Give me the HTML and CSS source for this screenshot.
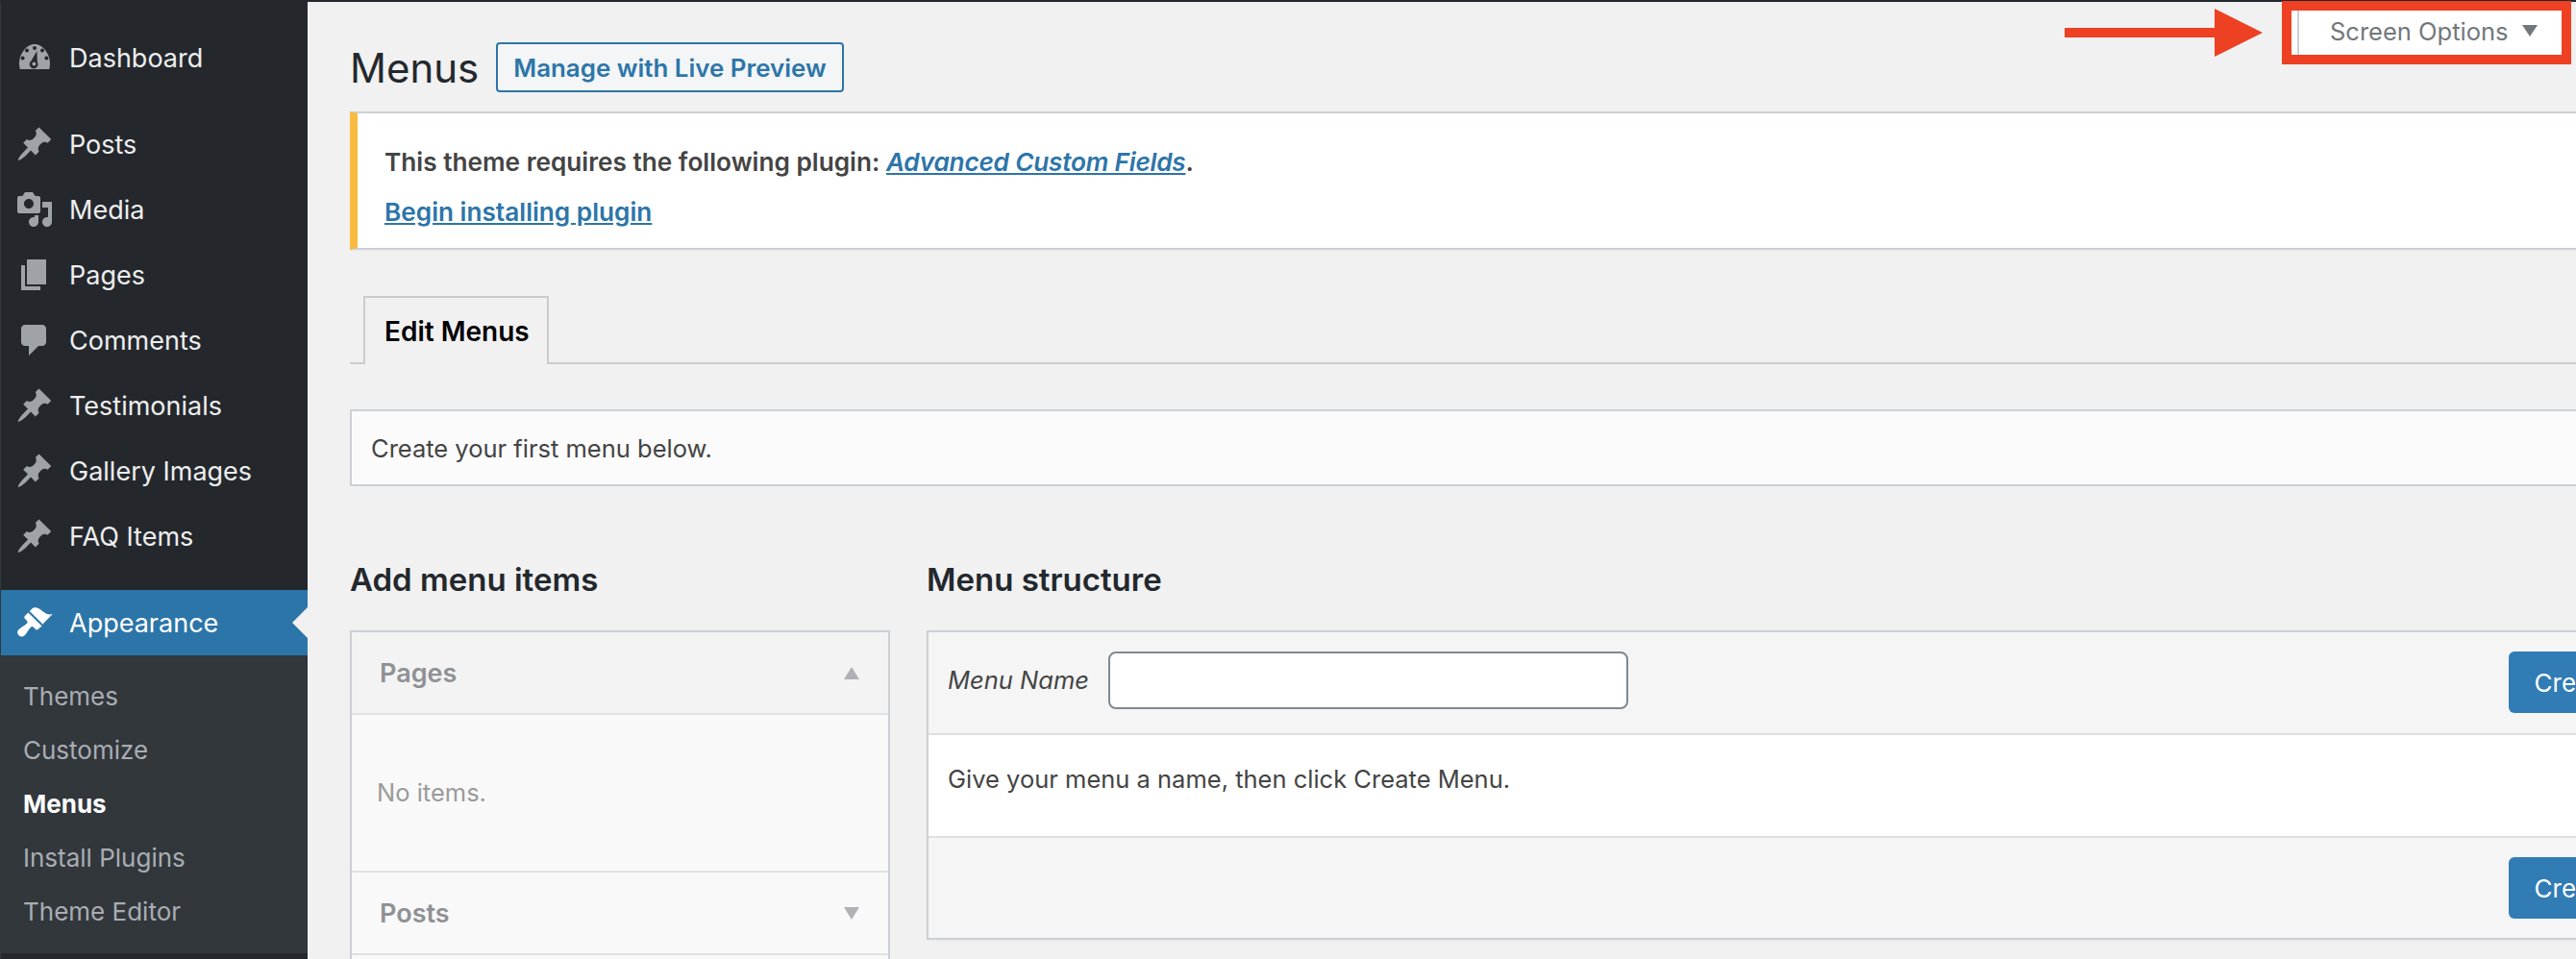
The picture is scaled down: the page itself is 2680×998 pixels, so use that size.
FILE: index.html
```html
<!DOCTYPE html>
<html lang="en">
<head>
    <meta charset="UTF-8">
    <title>Menus</title>
    <link rel="stylesheet" href="styles.css">
</head>
<body>
    <svg class="icon-defs" aria-hidden="true">
        <symbol id="icon-pin" viewBox="0 0 20 20"><path d="M10.44 3.02l1.82-1.82 6.36 6.35-1.83 1.82c-1.05-.68-2.48-.57-3.41.36l-.75.75c-.92.93-1.04 2.35-.35 3.41l-1.83 1.82-2.41-2.41-2.8 2.79c-.42.42-3.38 2.71-3.8 2.29s1.86-3.39 2.28-3.81l2.79-2.79L4.1 9.36l1.83-1.82c1.05.69 2.48.57 3.4-.36l.75-.75c.93-.92 1.05-2.35.36-3.41z"/></symbol>
    </svg>

    <div class="topbar"></div>

    <div class="wrap">
        <!-- Sidebar -->
        <aside class="sidebar">
            <a class="nav-item nav-dashboard">
                <svg class="nav-icon" viewBox="0 0 20 20">
                    <path d="M2.400 16C2.100 15 2 14 2 13c0-4.800 3.600-10 8-10s8 5.200 8 10c0 1-.1 2-.4 3z"/>
                    <g class="dial">
                        <circle cx="10" cy="5" r="1"/><circle cx="6" cy="6.300" r="1"/><circle cx="14" cy="6.300" r="1"/>
                        <circle cx="3.800" cy="10.200" r="1"/><circle cx="16.200" cy="10.200" r="1"/>
                        <path d="M11.200 6.500L11.400 12.200A2.200 2.200 0 1 1 8.300 11.600z"/>
                    </g>
                    <circle cx="9.700" cy="13.300" r="1"/>
                </svg>
                Dashboard
            </a>
            <a class="nav-item nav-first">
                <svg class="nav-icon"><use href="#icon-pin"/></svg>
                Posts
            </a>
            <a class="nav-item">
                <svg class="nav-icon" viewBox="0 0 20 20"><path d="M13 11V4c0-.55-.45-1-1-1h-1.670L9 1H5L3.670 3H2c-.55 0-1 .45-1 1v7c0 .55.45 1 1 1h10c.55 0 1-.45 1-1zM7 4.500c1.380 0 2.500 1.120 2.500 2.500S8.380 9.500 7 9.500 4.500 8.380 4.500 7 5.620 4.500 7 4.500zM14 6h5v10.500c0 1.380-1.120 2.500-2.500 2.500S14 17.880 14 16.500s1.120-2.500 2.500-2.500c.17 0 .34.020.5.050V9h-3V6zm-4 8.050V13h2v3.500c0 1.380-1.120 2.500-2.500 2.500S7 17.880 7 16.500 8.120 14 9.500 14c.17 0 .34.020.5.050z"/></svg>
                Media
            </a>
            <a class="nav-item">
                <svg class="nav-icon" viewBox="0 0 20 20"><path d="M6 15V2h10v13H6zm-1 1h8v2H3V5h2v11z"/></svg>
                Pages
            </a>
            <a class="nav-item">
                <svg class="nav-icon" viewBox="0 0 20 20"><path d="M5 2h9c1.100 0 2 .9 2 2v7c0 1.100-.9 2-2 2h-2l-5 5v-5H5c-1.100 0-2-.9-2-2V4c0-1.100.9-2 2-2z"/></svg>
                Comments
            </a>
            <a class="nav-item">
                <svg class="nav-icon"><use href="#icon-pin"/></svg>
                Testimonials
            </a>
            <a class="nav-item">
                <svg class="nav-icon"><use href="#icon-pin"/></svg>
                Gallery Images
            </a>
            <a class="nav-item">
                <svg class="nav-icon"><use href="#icon-pin"/></svg>
                FAQ Items
            </a>
            <a class="nav-item nav-current">
                <svg class="nav-icon" viewBox="0 0 20 20"><path d="M14.480 11.060L7.410 3.990l1.500-1.500c.5-.56 2.300-.47 3.510.32 1.210.8 1.430 1.280 2.910 2.100 1.180.64 2.450 1.260 4.170.51l-5.520 5.640zM13.770 11.770L6.700 4.700 4.930 6.470c-.39.39-.39 1.020 0 1.410l1.060 1.060c.39.39.39 1.030 0 1.420-.6.6-1.420 1.100-2.190 1.580-1.020.6-1.650 1.200-2.040 1.590-.97.97-.97 2.080 0 3.050.97.97 2.080.97 3.050 0 .39-.39.99-1.020 1.590-2.040.48-.77.98-1.590 1.580-2.190.39-.39 1.030-.39 1.420 0l1.060 1.060c.39.39 1.020.39 1.410 0z"/></svg>
                Appearance
            </a>
            <ul class="submenu">
                <li>Themes</li>
                <li>Customize</li>
                <li class="submenu-current">Menus</li>
                <li>Install Plugins</li>
                <li>Theme Editor</li>
            </ul>
        </aside>

        <!-- Page content -->
        <main class="content">
            <div class="title-row">
                <h1>Menus</h1>
                <a class="outline-btn">Manage with Live Preview</a>
            </div>

            <div class="notice">
                <p class="notice-line"><strong>This theme requires the following plugin: <a class="notice-link"><em>Advanced Custom Fields</em></a>.</strong></p>
                <p class="notice-line"><a class="notice-link"><strong>Begin installing plugin</strong></a></p>
            </div>

            <div class="tabs">
                <a class="tab">Edit Menus</a>
            </div>

            <div class="manage-box">Create your first menu below.</div>

            <div class="columns">
                <section class="col-items">
                    <h2>Add menu items</h2>
                    <div class="accordion">
                        <div class="acc-head acc-open">
                            <span>Pages</span>
                            <i class="tri tri-up"></i>
                        </div>
                        <div class="acc-body">No items.</div>
                        <div class="acc-head">
                            <span>Posts</span>
                            <i class="tri tri-down"></i>
                        </div>
                        <div class="acc-rest"></div>
                    </div>
                </section>

                <section class="col-structure">
                    <h2>Menu structure</h2>
                    <div class="menu-box">
                        <div class="menu-bar">
                            <label class="name-field">
                                <em>Menu Name</em>
                                <input type="text" class="name-input">
                            </label>
                            <button class="primary-btn">Create Menu</button>
                        </div>
                        <div class="menu-body">Give your menu a name, then click Create Menu.</div>
                        <div class="menu-bar menu-bar-bottom">
                            <button class="primary-btn">Create Menu</button>
                        </div>
                    </div>
                </section>
            </div>
        </main>
    </div>

    <!-- Annotation drawn over the screenshot -->
    <svg class="arrow" viewBox="0 0 206 50"><path d="M0 20h156V0l50 25-50 25V30H0z"/></svg>
    <div class="screen-options">
        <div class="screen-options-inner">
            Screen Options
            <i class="tri tri-options"></i>
        </div>
    </div>
</body>
</html>
```

FILE: styles.css
```css
* {
    box-sizing: border-box;
}

html, body {
    margin: 0;
    padding: 0;
    height: 998px;
    overflow: hidden;
}

body {
    position: relative;
    background-color: #f1f1f1;
    color: #444;
    font-family: Inter, "Noto Sans", sans-serif;
    font-size: 25.5px;
}

.icon-defs {
    display: none;
}

.topbar {
    height: 2px;
    background-color: #23282d;
}

.wrap {
    display: flex;
    height: 996px;
}

/* Sidebar */
.sidebar {
    flex: none;
    width: 320px;
    padding-top: 24px;
    background-color: #24282d;
    border-left: 1px solid #32373c;
}

.nav-item {
    position: relative;
    display: flex;
    align-items: center;
    height: 68px;
    padding-left: 15px;
    color: #eee;
    font-size: 27px;
}

.nav-icon {
    flex: none;
    width: 40px;
    height: 40px;
    margin-right: 16px;
    fill: #9ea3a8;
}

.dial {
    fill: #24282d;
}

.nav-first {
    margin-top: 22px;
}

.nav-current {
    margin-top: 22px;
    background-color: #2c75a9;
    color: #fff;
}

.nav-current .nav-icon {
    fill: #fff;
}

.nav-current::after {
    content: "";
    position: absolute;
    top: 18px;
    right: 0;
    border: 16px solid transparent;
    border-left-width: 0;
    border-right-color: #f1f1f1;
}

.submenu {
    list-style: none;
    margin: 0;
    padding: 15px 0 15px 23px;
    background-color: #32373c;
    color: #a9adb3;
    font-size: 26px;
}

.submenu li {
    height: 56px;
    line-height: 56px;
}

.submenu-current {
    color: #fff;
    font-weight: 700;
}

/* Content */
.content {
    flex: none;
    width: 2526px;
    padding: 42px 0 0 44px;
}

.title-row {
    display: flex;
    align-items: center;
    height: 52px;
}

h1 {
    margin: 0 18px 0 0;
    color: #23282d;
    font-size: 42px;
    font-weight: 400;
}

.outline-btn {
    display: flex;
    align-items: center;
    height: 52px;
    padding: 0 16px;
    border: 2px solid #2c75a9;
    border-radius: 4px;
    background-color: #f3f5f6;
    color: #2c75a9;
    font-size: 25.9px;
    font-weight: 600;
}

.notice {
    height: 144px;
    margin-top: 20px;
    padding: 25px 0 0 28px;
    background-color: #fff;
    border: 2px solid #ccd0d4;
    border-left: 8px solid #f8bb3f;
    box-shadow: 0 1px 2px rgba(0, 0, 0, 0.04);
    font-size: 26.2px;
}

.notice-line {
    margin: 0;
    line-height: 52px;
}

.notice strong {
    font-weight: 600;
}

.notice-link {
    color: #2c75a9;
    text-decoration: underline;
}

.notice-link em {
    letter-spacing: -0.2px;
}

.tabs {
    display: flex;
    height: 71px;
    margin-top: 48px;
    padding-left: 14px;
    border-bottom: 2px solid #ccc;
}

.tab {
    display: flex;
    align-items: center;
    height: 71px;
    padding: 0 18px 0 20px;
    border: 2px solid #ccc;
    border-bottom: none;
    background-color: #f1f1f1;
    color: #000;
    font-size: 28px;
    font-weight: 600;
}

.manage-box {
    display: flex;
    align-items: center;
    height: 80px;
    margin-top: 47px;
    padding-left: 20px;
    background-color: #fbfbfb;
    border: 2px solid #ccd0d4;
}

.columns {
    display: flex;
    gap: 38px;
    margin-top: 77px;
}

.col-items {
    flex: none;
    width: 562px;
}

.col-structure {
    flex: 1;
}

h2 {
    margin: 0 0 33px;
    color: #23282d;
    font-size: 33px;
    font-weight: 600;
    line-height: 40px;
}

/* Left accordion */
.accordion {
    background-color: #f9f9f9;
    border: 2px solid #ccd0d4;
}

.acc-head {
    display: flex;
    align-items: center;
    justify-content: space-between;
    height: 86px;
    padding: 0 30px 0 29px;
    border-bottom: 2px solid #e0e1e3;
    color: #8f9195;
    font-size: 27px;
    font-weight: 600;
}

.acc-open {
    background-color: #f3f3f3;
}

.acc-body {
    display: flex;
    align-items: center;
    height: 164px;
    padding: 0 0 2px 26px;
    border-bottom: 2px solid #e0e1e3;
    color: #9a9a9a;
}

.acc-rest {
    height: 40px;
}

.tri {
    display: block;
    border-style: solid;
    border-color: transparent;
    border-width: 0 8px;
}

.tri-up {
    border-bottom: 13px solid #b0b1b5;
}

.tri-down {
    border-top: 13px solid #b0b1b5;
}

.tri-options {
    position: absolute;
    top: 15px;
    right: 25px;
    border-top: 12px solid #72777c;
}

/* Right panel */
.menu-box {
    background-color: #f5f5f5;
    border: 2px solid #ccd0d4;
    box-shadow: 0 1px 2px rgba(0, 0, 0, 0.04);
}

.menu-bar {
    display: flex;
    align-items: flex-start;
    justify-content: space-between;
    height: 107px;
    padding: 20px 22px 0 20px;
    border-bottom: 2px solid #dfe0e2;
}

.menu-bar-bottom {
    justify-content: flex-end;
    height: 104px;
    border-bottom: none;
}

.name-field {
    display: flex;
    align-items: center;
    gap: 20px;
    height: 60px;
}

.name-field em {
    padding-bottom: 2px;
}

.name-input {
    width: 541px;
    height: 60px;
    border: 2px solid #7e8993;
    border-radius: 8px;
    background-color: #fff;
}

.primary-btn {
    height: 64px;
    padding: 0 27px;
    border: none;
    border-radius: 6px;
    background-color: #317cb5;
    color: #fff;
    font-family: inherit;
    font-size: 26px;
}

.menu-body {
    height: 107px;
    padding: 26px 0 0 20px;
    background-color: #fff;
    border-bottom: 2px solid #dfe0e2;
    line-height: 40px;
}

/* Screen options callout */
.screen-options {
    position: absolute;
    top: 1px;
    right: 5px;
    width: 301px;
    height: 66px;
    padding-left: 6px;
    background-color: #fff;
    border: 10px solid #ee4023;
}

.screen-options-inner {
    height: 46px;
    padding-left: 32px;
    border-left: 2px solid #ccd0d4;
    color: #72777c;
    line-height: 44px;
}

.arrow {
    position: absolute;
    top: 9px;
    left: 2148px;
    width: 206px;
    height: 50px;
    fill: #ee4023;
}
```
